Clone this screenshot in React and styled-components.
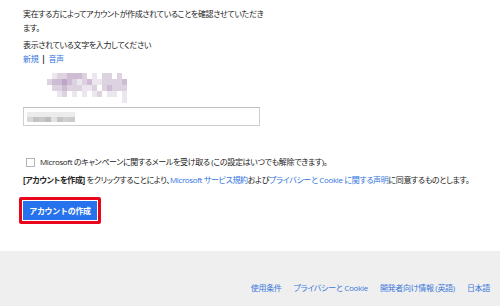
import React from "react";
import styled, { createGlobalStyle } from "styled-components";

const Global = createGlobalStyle`
  html, body { margin: 0; padding: 0; background: #fff; }
  body {
    width: 500px; height: 306px; overflow: hidden;
    font-family: "Open Sans", "Noto Sans CJK JP", sans-serif;
    color: #222;
    font-feature-settings: "palt";
  }
`;

const Page = styled.div`
  display: flex;
  flex-direction: column;
  width: 500px;
  height: 306px;
  overflow: hidden;
`;

const Main = styled.main`
  flex: none;
  height: 251px;
  box-sizing: border-box;
  padding: 7px 23px 0;
  display: flex;
  flex-direction: column;
  font-size: 8px;
  letter-spacing: -0.35px;
`;

const Para = styled.p`
  margin: ${(p) => p.$mt || 0}px 0 0;
  line-height: 14px;
  width: ${(p) => p.$w || "auto"};
`;

const Link = styled.a`
  color: #2f74e0;
  text-decoration: none;
`;

const Sep = styled.span`
  color: #222;
  font-weight: bold;
  margin: 0 3px;
`;

const CaptchaWrap = styled.div`
  margin: 7px 0 0 19px;
  height: 28px;
  display: flex;
`;

const InputBox = styled.div`
  margin-top: 6px;
  width: 237px;
  height: 19px;
  box-sizing: border-box;
  border: 1px solid #cfcfcf;
  border-top-color: #bdbdbd;
  display: flex;
  align-items: center;
  padding-left: 3px;
`;

const CheckRow = styled.label`
  margin-top: 29px;
  display: flex;
  align-items: center;
  gap: 5px;
  line-height: 14px;
  padding-left: 3px;
`;

const Box = styled.span`
  width: 7px;
  height: 7px;
  border: 1px solid #b5b5b5;
  background: #fff;
  flex: none;
`;

const Agree = styled.p`
  margin: 4px 0 0;
  line-height: 14px;
  white-space: nowrap;
`;

const Bold = styled.b`
  font-weight: bold;
`;

const Highlight = styled.div`
  margin: 10px 0 0 -4px;
  align-self: flex-start;
  border: 3px solid #e8071a;
  border-radius: 2px;
  padding: 1px;
  background: #fff;
`;

const Button = styled.button`
  display: block;
  width: 74px;
  height: 19px;
  border: none;
  padding: 0;
  background: #2672ec;
  color: #fff;
  font-family: inherit;
  font-size: 8px;
  letter-spacing: -0.3px;
  font-weight: bold;
`;

const Footer = styled.footer`
  flex: 1;
  background: #efefef;
  display: flex;
  justify-content: flex-end;
  align-items: flex-end;
  padding: 0 10px 12px 0;
  gap: 12px;
  font-size: 8px;
  letter-spacing: -0.3px;
  line-height: 12px;
`;

const FootLink = styled.a`
  color: #3a78dc;
  text-decoration: none;
`;

const captchaCells = [
  "..abbcccb.a.bb.b..",
  ".bccdcbabcaabbbbc.",
  "..bbcbbbaab.bcbbb.",
  "...ab.a.a.ab.aa.a.",
  "................a.",
];
const shades = { a: "#ece6ee", b: "#ddd2e0", c: "#cdbcd3", d: "#bfa6c6" };

function Captcha() {
  return (
    <svg width="92" height="30" viewBox="0 0 92 30">
      {captchaCells.map((row, r) =>
        row.split("").map((ch, c) =>
          ch === "." ? null : (
            <rect key={`${r}-${c}`} x={c * 5} y={r * 6} width="5" height="6" fill={shades[ch]} />
          )
        )
      )}
    </svg>
  );
}

function MaskedValue() {
  const cells = ["#d8d8d8", "#c2c2c2", "#c9c9c9", "#bdbdbd", "#e2e2e2", "#c4c4c4", "#d0d0d0", "#cbcbcb"];
  return (
    <svg width="48" height="10" viewBox="0 0 48 10">
      {cells.map((c, i) => (
        <rect key={i} x={i * 6} y="0" width="6" height="5" fill="#ececec" />
      ))}
      {cells.map((c, i) => (
        <rect key={"b" + i} x={i * 6} y="5" width="6" height="5" fill={c} />
      ))}
    </svg>
  );
}

export default function App() {
  return (
    <>
      <Global />
      <Page>
        <Main>
          <Para $w="242px">実在する方によってアカウントが作成されていることを確認させていただきます。</Para>
          <Para $mt={3}>表示されている文字を入力してください</Para>
          <Para>
            <Link href="#">新規</Link>
            <Sep>|</Sep>
            <Link href="#">音声</Link>
          </Para>
          <CaptchaWrap>
            <Captcha />
          </CaptchaWrap>
          <InputBox>
            <MaskedValue />
          </InputBox>
          <CheckRow>
            <Box />
            <span>Microsoft のキャンペーンに関するメールを受け取る (この設定はいつでも解除できます)。</span>
          </CheckRow>
          <Agree>
            <Bold>[アカウントを作成]</Bold> をクリックすることにより、<Link href="#">Microsoft サービス規約</Link>および
            <Link href="#">プライバシーと Cookie に関する声明</Link>に同意するものとします。
          </Agree>
          <Highlight>
            <Button>アカウントの作成</Button>
          </Highlight>
        </Main>
        <Footer>
          <FootLink href="#">使用条件</FootLink>
          <FootLink href="#">プライバシーと Cookie</FootLink>
          <FootLink href="#">開発者向け情報 (英語)</FootLink>
          <FootLink href="#">日本語</FootLink>
        </Footer>
      </Page>
    </>
  );
}
